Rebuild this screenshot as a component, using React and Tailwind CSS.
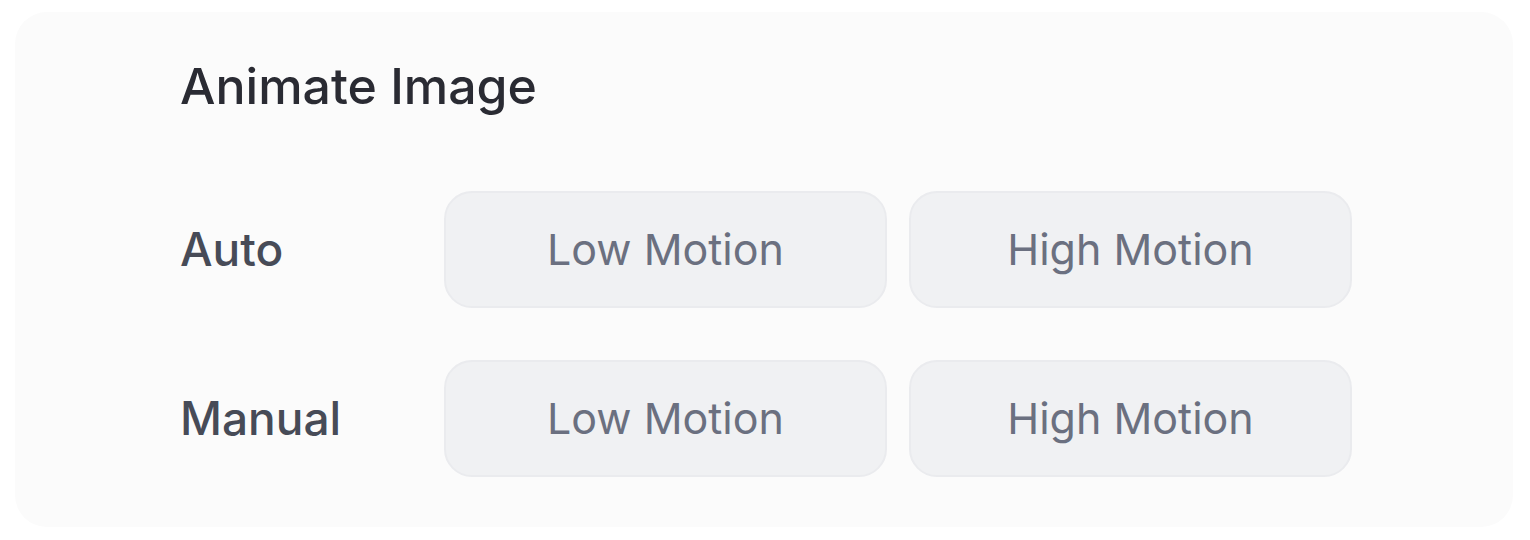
export default function App() {
  const btn =
    "flex h-[117px] w-[443px] items-center justify-center rounded-[28px] border-2 border-[#eaebee] bg-[#f0f1f3] text-[43px] font-normal text-[#6b7080]";
  return (
    <div className="h-[540px] w-[1530px] bg-white pt-[12px] pl-[15px]" style={{ fontFamily: "Inter, 'Noto Sans', sans-serif" }}>
      <div className="h-[515px] w-[1498px] rounded-[32px] bg-[#fbfbfb] pl-[165px] pt-[40px]">
        <div className="text-[50px] font-medium leading-[68px] text-[#2a2b33]">Animate Image</div>
        <div className="mt-[71px] flex flex-col gap-[52px]">
          {["Auto", "Manual"].map((l) => (
            <div key={l} className="flex items-center">
              <div className="w-[264px] text-[46px] font-medium text-[#474b57]">{l}</div>
              <div className="flex gap-[22px]">
                <div className={btn}>Low Motion</div>
                <div className={btn}>High Motion</div>
              </div>
            </div>
          ))}
        </div>
      </div>
    </div>
  );
}
